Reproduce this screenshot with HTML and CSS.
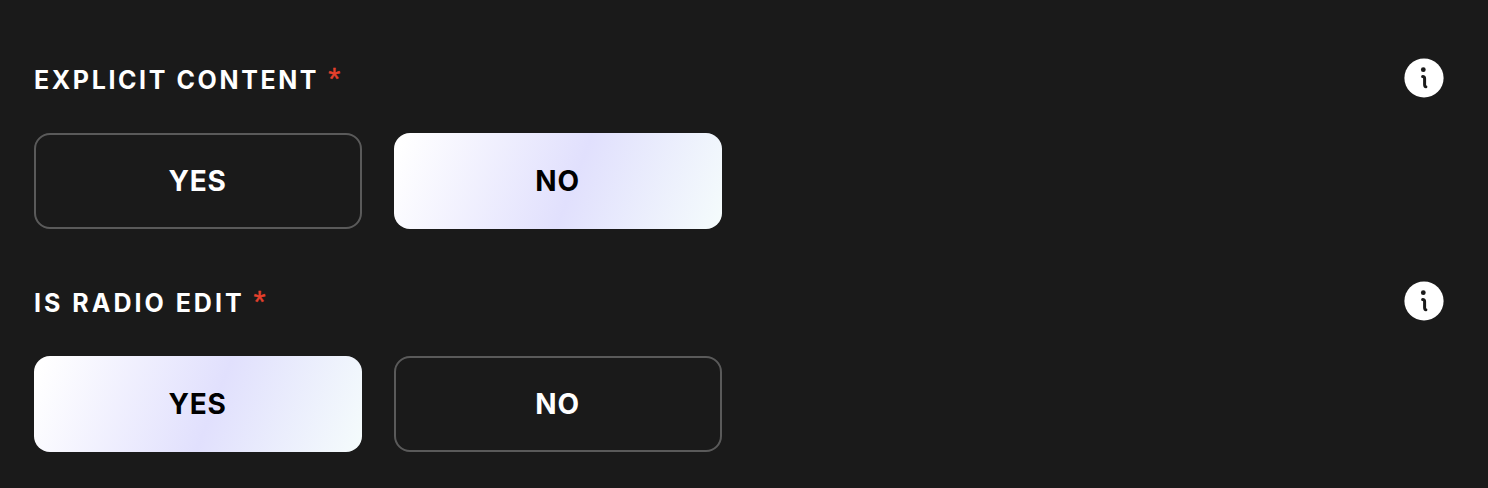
FILE: index.html
```
<!DOCTYPE html>
<html lang="en">
<head>
  <meta charset="UTF-8">
  <meta name="viewport" content="width=device-width, initial-scale=1.0">
  <title>Track Details</title>
  <link rel="stylesheet" href="styles.css">
</head>
<body>
  <form class="track-form">
    <div class="field">
      <div class="field-header">
        <div class="label"><span class="label-text">EXPLICIT CONTENT</span><span class="required">*</span></div>
        <svg class="info" viewBox="0 0 40 40" width="40" height="40">
          <circle cx="20" cy="20" r="19.6" fill="#fff"/>
          <circle cx="19.3" cy="11.7" r="2.4" fill="#1a1a1a"/>
          <path d="M18.6 18.4Q20.6 18.4 20.6 20.4V26.6Q20.6 28.8 21.9 28.8" fill="none" stroke="#1a1a1a" stroke-width="3" stroke-linecap="round"/>
        </svg>
      </div>
      <div class="options">
        <button type="button" class="option">YES</button>
        <button type="button" class="option selected">NO</button>
      </div>
    </div>

    <div class="field">
      <div class="field-header">
        <div class="label wide"><span class="label-text">IS RADIO EDIT</span><span class="required">*</span></div>
        <svg class="info" viewBox="0 0 40 40" width="40" height="40">
          <circle cx="20" cy="20" r="19.6" fill="#fff"/>
          <circle cx="19.3" cy="11.7" r="2.4" fill="#1a1a1a"/>
          <path d="M18.6 18.4Q20.6 18.4 20.6 20.4V26.6Q20.6 28.8 21.9 28.8" fill="none" stroke="#1a1a1a" stroke-width="3" stroke-linecap="round"/>
        </svg>
      </div>
      <div class="options">
        <button type="button" class="option selected">YES</button>
        <button type="button" class="option">NO</button>
      </div>
    </div>
  </form>
</body>
</html>
```
FILE: styles.css
```
body {
  margin: 0;
  background-color: #1a1a1a;
  color: #fff;
  font-family: Inter, sans-serif;
}
.track-form {
  display: flex;
  flex-direction: column;
  gap: 52px;
  padding: 58px 44px 36px 34px;
}
.field-header {
  display: flex;
  justify-content: space-between;
  height: 40px;
  margin-bottom: 35px;
}
.label {
  display: flex;
  padding-top: 2px;
  font-size: 25px;
  font-weight: 700;
  line-height: 41px;
  letter-spacing: 2.6px;
}
.label.wide {
  letter-spacing: 3px;
}
.required {
  margin-left: 9px;
  color: #e5402c;
  font-family: "Liberation Sans", sans-serif;
  font-size: 31px;
  font-weight: 400;
  line-height: 39px;
  -webkit-text-stroke: 0.4px #e5402c;
}
.options {
  display: flex;
  gap: 32px;
}
.option {
  box-sizing: border-box;
  width: 328px;
  height: 96px;
  padding: 0 1px 0 0;
  border: 2px solid #5a5a5a;
  border-radius: 16px;
  background: none;
  color: #fff;
  font-family: inherit;
  font-size: 28px;
  font-weight: 700;
  letter-spacing: 0.8px;
}
.option.selected {
  border-color: transparent;
  background: linear-gradient(111deg, #fff 3%, #e1e0fd 54.5%, #f5fcfc 100%) border-box;
  color: #000;
}
```
